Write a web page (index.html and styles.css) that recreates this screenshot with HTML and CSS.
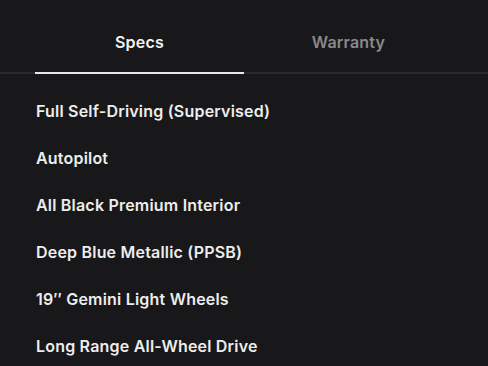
FILE: index.html
```html
<!DOCTYPE html>
<html lang="en">
<head>
    <meta charset="UTF-8">
    <meta name="viewport" content="width=device-width, initial-scale=1.0">
    <title>Specs</title>
    <link rel="stylesheet" href="styles.css">
</head>
<body>
    <div class="tabs">
        <div class="tab active">Specs</div>
        <div class="tab">Warranty</div>
    </div>
    <ul class="spec-list">
        <li>Full Self-Driving (Supervised)</li>
        <li>Autopilot</li>
        <li>All Black Premium Interior</li>
        <li>Deep Blue Metallic (PPSB)</li>
        <li>19&#8242;&#8242; Gemini Light Wheels</li>
        <li>Long Range All-Wheel Drive</li>
    </ul>
</body>
</html>
```

FILE: styles.css
```css
body {
    margin: 0;
    background-color: #18181a;
    font-family: 'Inter', 'Liberation Sans', sans-serif;
    color: #ededed;
    overflow: hidden;
}

.tabs {
    display: flex;
    padding: 0 35px;
    border-bottom: 2px solid #2a2a2c;
}

.tab {
    flex: 1;
    text-align: center;
    font-size: 16px;
    font-weight: 600;
    letter-spacing: 0.2px;
    color: #8a8a8c;
    padding: 32px 0 20px;
    margin-bottom: -2px;
    border-bottom: 2px solid transparent;
}

.tab.active {
    color: #f2f2f2;
    border-bottom-color: #e8e8e8;
}

.spec-list {
    list-style: none;
    margin: 0;
    padding: 25px 36px 0;
}

.spec-list li {
    font-size: 16px;
    font-weight: 600;
    letter-spacing: 0.2px;
    height: 47px;
    line-height: 24px;
}
```
